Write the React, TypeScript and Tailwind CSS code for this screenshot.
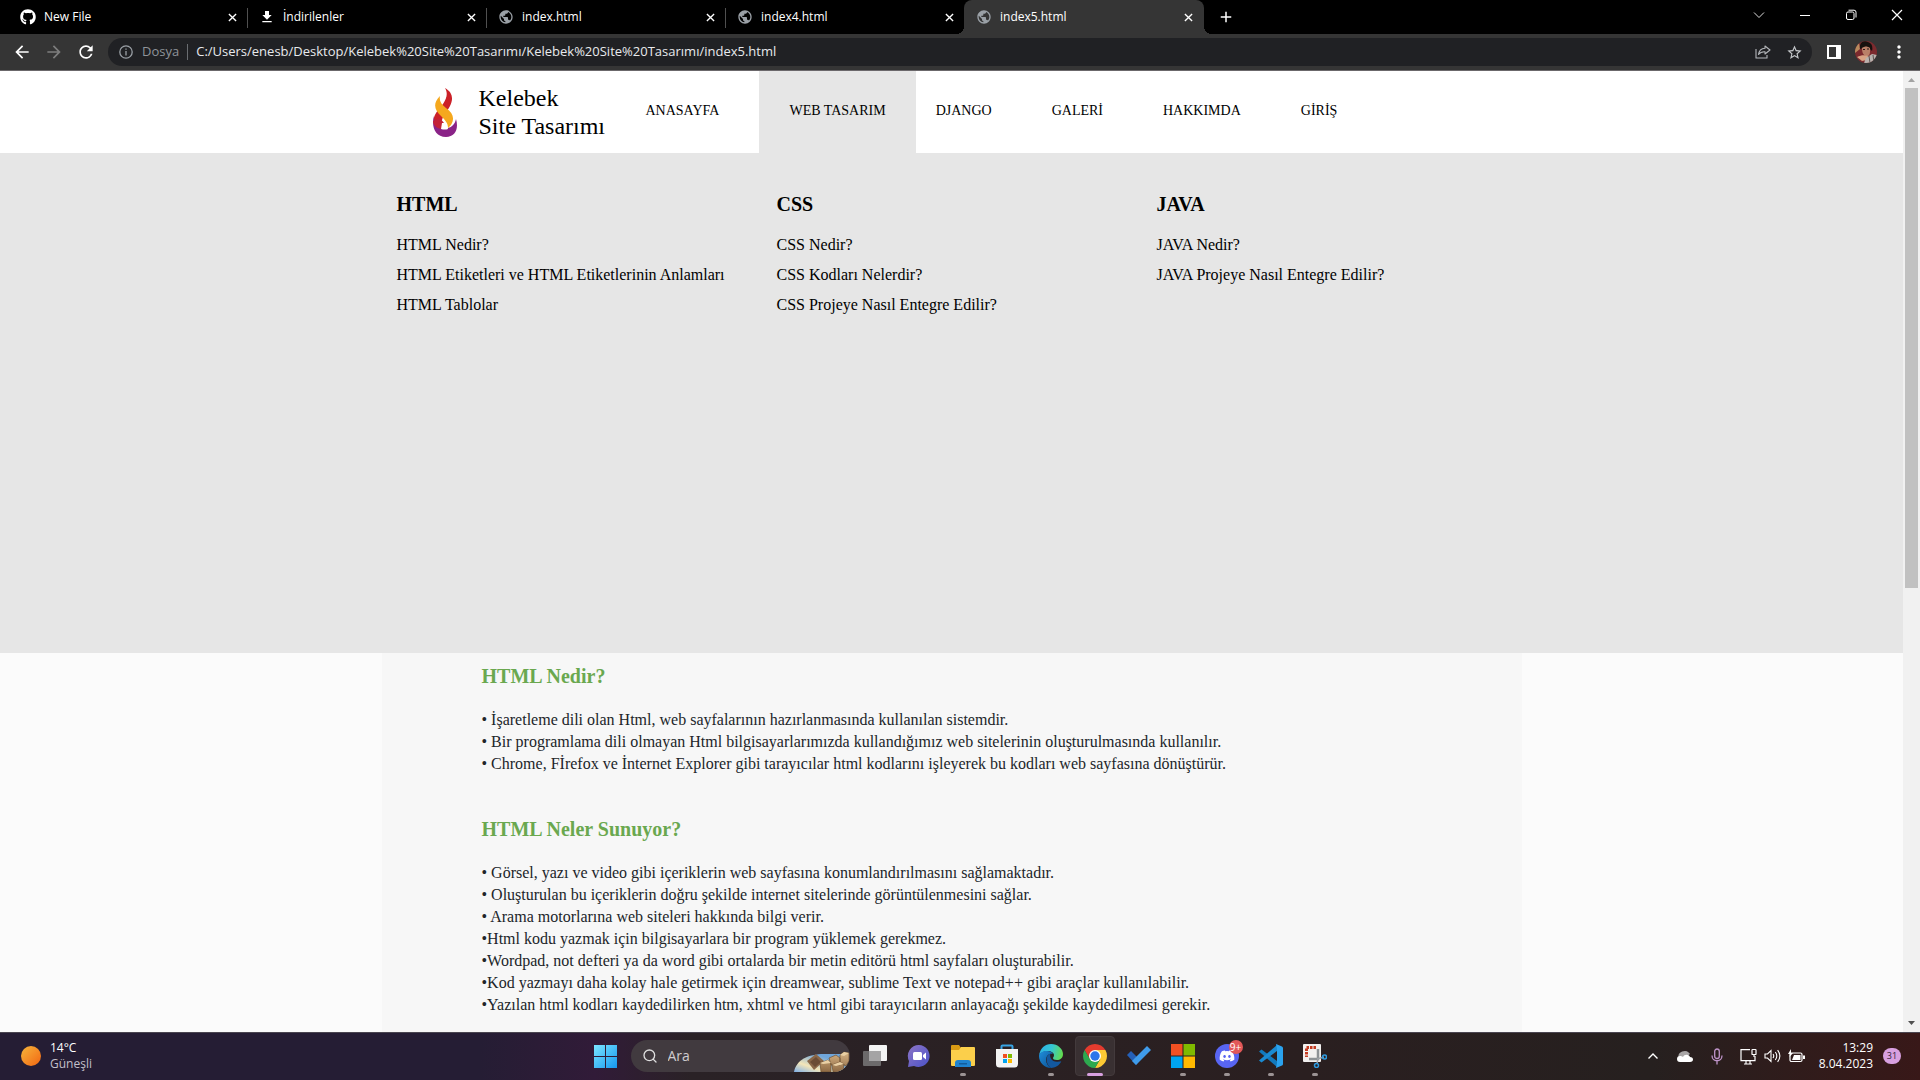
import React from "react";
import { FaGithub, FaDiscord } from "react-icons/fa";
import { MdPublic, MdDownload, MdRefresh, MdArrowBack, MdArrowForward, MdMoreVert, MdStarBorder, MdAdd } from "react-icons/md";
import { Search } from "lucide-react";

const tabs = [
  { title: "New File", icon: <FaGithub className="size-4 text-white" />, active: false, line: true },
  { title: "İndirilenler", icon: <MdDownload className="size-4 text-white" />, active: false, line: true },
  { title: "index.html", icon: <MdPublic className="size-4 text-[#9aa0a6]" />, active: false, line: true },
  { title: "index4.html", icon: <MdPublic className="size-4 text-[#9aa0a6]" />, active: false, line: false },
  { title: "index5.html", icon: <MdPublic className="size-4 text-[#9aa0a6]" />, active: true, line: false },
];

const menu = [
  { title: "HTML", links: ["HTML Nedir?", "HTML Etiketleri ve HTML Etiketlerinin Anlamları", "HTML Tablolar"] },
  { title: "CSS", links: ["CSS Nedir?", "CSS Kodları Nelerdir?", "CSS Projeye Nasıl Entegre Edilir?"] },
  { title: "JAVA", links: ["JAVA Nedir?", "JAVA Projeye Nasıl Entegre Edilir?"] },
];

const sections = [
  {
    title: "HTML Nedir?",
    lines: [
      "• İşaretleme dili olan Html, web sayfalarının hazırlanmasında kullanılan sistemdir.",
      "• Bir programlama dili olmayan Html bilgisayarlarımızda kullandığımız web sitelerinin oluşturulmasında kullanılır.",
      "• Chrome, Fİrefox ve İnternet Explorer gibi tarayıcılar html kodlarını işleyerek bu kodları web sayfasına dönüştürür.",
    ],
  },
  {
    title: "HTML Neler Sunuyor?",
    lines: [
      "• Görsel, yazı ve video gibi içeriklerin web sayfasına konumlandırılmasını sağlamaktadır.",
      "• Oluşturulan bu içeriklerin doğru şekilde internet sitelerinde görüntülenmesini sağlar.",
      "• Arama motorlarına web siteleri hakkında bilgi verir.",
      "•Html kodu yazmak için bilgisayarlara bir program yüklemek gerekmez.",
      "•Wordpad, not defteri ya da word gibi ortalarda bir metin editörü html sayfaları oluşturabilir.",
      "•Kod yazmayı daha kolay hale getirmek için dreamwear, sublime Text ve notepad++ gibi araçlar kullanılabilir.",
      "•Yazılan html kodları kaydedilirken htm, xhtml ve html gibi tarayıcıların anlayacağı şekilde kaydedilmesi gerekir.",
    ],
  },
];

function Cross({ className }: { className: string }) {
  return (
    <svg viewBox="0 0 10 10" className={className} stroke="currentColor" strokeWidth="1.5" fill="none">
      <path d="M1 1l8 8M9 1L1 9" />
    </svg>
  );
}

function TabStrip() {
  return (
    <div className="flex h-[34px] items-stretch bg-black pl-2 text-white">
      {tabs.map((t) => (
        <div
          key={t.title}
          className={
            t.active
              ? "relative flex w-[240px] items-center rounded-t-lg bg-[#353535] pr-2 pl-3"
              : "relative flex w-[239px] items-center pr-[7px] pl-3"
          }
        >
          {t.active && (
            <>
              <span className="absolute bottom-0 -left-2 size-2 bg-[radial-gradient(circle_at_0_0,#000_8px,#353535_8px)]" />
              <span className="absolute -right-2 bottom-0 size-2 bg-[radial-gradient(circle_at_100%_0,#000_8px,#353535_8px)]" />
            </>
          )}
          {t.icon}
          <span className="ml-2 flex-1 text-xs">{t.title}</span>
          <button aria-label={`${t.title} sekmesini kapat`} className="flex size-4 items-center justify-center">
            <Cross className="size-[9px]" />
          </button>
          {t.line && <span className="absolute top-2 -right-px h-5 w-px bg-[#505050]" />}
        </div>
      ))}
      <button aria-label="Yeni sekme" className="ml-[13px] flex items-center">
        <MdAdd className="size-[18px]" />
      </button>
      <div className="ml-auto flex items-center pb-1">
        <button aria-label="Sekme ara" className="flex w-[46px] justify-center">
          <svg viewBox="0 0 12 12" className="size-3" stroke="#ddd" fill="none"><path d="M1 3.5l5 5 5-5" /></svg>
        </button>
        <button aria-label="Simge durumuna küçült" className="flex w-[46px] justify-center">
          <svg viewBox="0 0 12 12" className="size-3" stroke="#fff" fill="none"><path d="M1 6.5h10" /></svg>
        </button>
        <button aria-label="Önceki boyut" className="flex w-[46px] justify-center">
          <svg viewBox="0 0 12 12" className="size-3" stroke="#fff" fill="none">
            <rect x="1.5" y="3" width="7.5" height="7.5" rx="1.5" />
            <path d="M3.5 1.2H9a2 2 0 0 1 2 2v5.3" />
          </svg>
        </button>
        <button aria-label="Kapat" className="flex w-[46px] justify-center">
          <svg viewBox="0 0 12 12" className="size-3" stroke="#fff" fill="none" strokeWidth="1.2"><path d="M1 1l10 10M11 1L1 11" /></svg>
        </button>
      </div>
    </div>
  );
}

function Toolbar() {
  return (
    <div className="flex h-[37px] items-center border-b border-[#6b686b] bg-[#353535] pl-3 text-white">
      <button aria-label="Geri" className="flex w-8 items-center"><MdArrowBack className="size-5" /></button>
      <button aria-label="İleri" className="flex w-8 items-center"><MdArrowForward className="size-5 text-[#7d7d7d]" /></button>
      <button aria-label="Yenile" className="flex w-8 items-center"><MdRefresh className="size-5" /></button>
      <div className="flex h-7 flex-1 items-center rounded-full bg-[#202124] pr-[9px] pl-[11px]">
        <svg viewBox="0 0 14 14" className="size-[14px] shrink-0" stroke="#9aa0a6" strokeWidth="1.3" fill="none">
          <circle cx="7" cy="7" r="6.2" /><path d="M7 6v4.5M7 3.4v1.4" />
        </svg>
        <span className="ml-[9px] text-[13px] text-[#8f949a]">Dosya</span>
        <span className="mx-2 h-4 w-px bg-[#6a6d71]" />
        <input
          aria-label="Adres çubuğu"
          readOnly
          value="C:/Users/enesb/Desktop/Kelebek%20Site%20Tasarımı/Kelebek%20Site%20Tasarımı/index5.html"
          className="min-w-0 flex-1 bg-transparent text-[13px] text-[#e8eaed] outline-none"
        />
        <button aria-label="Paylaş" className="mr-[15px]">
          <svg viewBox="0 0 16 16" className="size-4" stroke="#b4b7bb" strokeWidth="1.1" fill="none" strokeLinejoin="round">
            <path d="M1 5v9h11v-3" />
            <path d="M10 2l5 4-5 4V7.8C7 7.600 5 8.500 3.500 10.500 4 7 6.500 4.400 10 4.200z" />
          </svg>
        </button>
        <button aria-label="Yer işareti ekle"><MdStarBorder className="size-[17px] text-[#c4c7ca]" /></button>
      </div>
      <button aria-label="Yan panel" className="ml-[15px]">
        <svg viewBox="0 0 14 14" className="size-[14px]" fill="#fff"><path d="M0 0h14v14H0zM2 2v10h7V2z" fillRule="evenodd" /></svg>
      </button>
      <button aria-label="Profil" className="ml-[14px]">
        <svg viewBox="0 0 22 22" className="size-[22px]">
          <defs><clipPath id="face"><circle cx="11" cy="11" r="11" /></clipPath></defs>
          <g clipPath="url(#face)">
            <rect width="22" height="22" fill="#7c2a2e" />
            <path d="M0 3l4-1 1 6-5 4z" fill="#b98a5e" />
            <path d="M5 8C4 1 9-1 13 1c4 1 5 5 4 9l-4-4-5 1z" fill="#17110f" />
            <path d="M7 7c3-2 5-2 8 0l0 4c0 3-2 5-4 4-3-1-4-4-4-8z" fill="#b98068" />
            <path d="M2 16c4-2 8-2 11-1l-1 4-5 1z" fill="#d8a384" />
            <path d="M11 17l6-4 5 1v8H9z" fill="#b9b2ae" />
            <path d="M14 15l1 7M18 14l1 8" stroke="#5d5350" strokeWidth="1" />
            <path d="M8 8.500h2M12 8h2" stroke="#2a1a16" strokeWidth="1" />
          </g>
        </svg>
      </button>
      <button aria-label="Chrome menüsü" className="mr-[11px] ml-3"><MdMoreVert className="size-5" /></button>
    </div>
  );
}

function Flame() {
  return (
    <svg viewBox="0 0 24 49" className="h-[49px] w-6">
      <path d="M12 0c7 4 9 10 5 18-3 6-8 9-9 19l-5 3C-3 29 4 24 10 16c4-6 5-11 2-16z" fill="#cb2128" />
      <path d="M1 28c-3 10 1 21 12 21 9 0 13-8 10-18-1 5-4 8-8 9H9c-5-2-8-6-8-12z" fill="#8a2387" />
      <path d="M0 33c0 4 4 8 9 8l2-6-4-5z" fill="#c32238" />
      <path d="M9 35h5l1 6q-3 1-7 0z" fill="#fff" />
      <path d="M7 8c-1 5 1 8 6 12 7 5 9 10 5 17l-3 3c0-5-3-8-7-12C2 22-1 16 7 8z" fill="#f5a81e" />
    </svg>
  );
}

function SiteHeader() {
  return (
    <header className="flex h-[82px] shrink-0 bg-white text-black">
      <div className="mx-auto flex w-full max-w-[1140px] pl-[51px]">
        <a href="#" className="flex items-center">
          <Flame />
          <span className="ml-[22px] w-[137px] text-2xl leading-7">Kelebek<br />Site Tasarımı</span>
        </a>
        <nav className="flex items-stretch text-sm">
          <a href="#" className="flex items-center pr-10 pb-0.5 pl-[30px]">ANASAYFA</a>
          <a href="#" className="flex items-center bg-[#e6e6e6] px-[30px] pb-0.5">WEB TASARIM</a>
          <a href="#" className="flex items-center pr-[30px] pb-0.5 pl-5">DJANGO</a>
          <a href="#" className="flex items-center px-[30px] pb-0.5">GALERİ</a>
          <a href="#" className="flex items-center px-[30px] pb-0.5">HAKKIMDA</a>
          <a href="#" className="flex items-center px-[30px] pb-0.5">GİRİŞ</a>
        </nav>
      </div>
    </header>
  );
}

function Site() {
  return (
    <div className="flex min-w-0 flex-1 flex-col overflow-hidden bg-[#fbfbfb] font-['Liberation_Serif',serif]">
      <SiteHeader />
      <div className="h-[500px] shrink-0 bg-[#e6e6e6] text-black">
        <div className="mx-auto grid w-full max-w-[1140px] grid-cols-3 pt-[39px]">
          {menu.map((c) => (
            <div key={c.title} className="pl-[15px] whitespace-nowrap">
              <h3 className="text-xl leading-6 font-bold">{c.title}</h3>
              <ul className="mt-[14px] text-base leading-[30px]">
                {c.links.map((l) => (
                  <li key={l}><a href="#">{l}</a></li>
                ))}
              </ul>
            </div>
          ))}
        </div>
      </div>
      <main className="mx-auto w-full max-w-[1140px] flex-1 bg-[#f7f7f7] px-[100px] pt-[11px] text-[#212529]">
        {sections.map((s) => (
          <section key={s.title} className="mb-[42px]">
            <h2 className="text-xl leading-6 font-bold text-[#6aa84f]">{s.title}</h2>
            <div className="mt-[21px] text-base leading-[22px]">
              {s.lines.map((l) => (
                <p key={l}>{l}</p>
              ))}
            </div>
          </section>
        ))}
      </main>
    </div>
  );
}

function Scrollbar() {
  return (
    <div className="flex w-[17px] shrink-0 flex-col items-center bg-[#f1f1f1]">
      <svg viewBox="0 0 17 17" className="size-[17px]" fill="#a3a3a3"><path d="M5 11l3.500-4 3.500 4z" /></svg>
      <span className="h-[500px] w-[13px] bg-[#c1c1c1]" />
      <svg viewBox="0 0 17 17" className="mt-auto size-[17px]" fill="#505050"><path d="M5 6l3.500 4L12 6z" /></svg>
    </div>
  );
}

function WindowsLogo() {
  return (
    <svg viewBox="0 0 23 23" className="size-[23px]">
      <defs>
        <linearGradient id="win" x1="0" y1="0" x2="1" y2="1"><stop offset="0" stopColor="#7be6ff" /><stop offset="1" stopColor="#1597ef" /></linearGradient>
      </defs>
      <path d="M0 0h11v11H0zM12 0h11v11H12zM0 12h11v11H0zM12 12h11v11H12z" fill="url(#win)" />
    </svg>
  );
}

function SearchArt() {
  return (
    <svg viewBox="0 0 56 22" className="absolute right-0 bottom-0 h-[22px] w-14">
      <defs>
        <linearGradient id="sky" x1="0" y1="1" x2="1" y2="0"><stop offset="0" stopColor="#7fb0e8" /><stop offset=".3" stopColor="#f4e6b8" /><stop offset=".7" stopColor="#6fa6dc" /></linearGradient>
        <linearGradient id="stone" x1="0" y1="0" x2="0" y2="1"><stop offset="0" stopColor="#d8b586" /><stop offset="1" stopColor="#8e6a44" /></linearGradient>
      </defs>
      <path d="M0 22C2 10 14 4 30 4h24v8c-2 7-7 10-13 10z" fill="url(#sky)" />
      <path d="M13 11l9-7 8 7-10 9z" fill="#8a6748" />
      <path d="M16 12l6-5 5 5-6 5z" fill="#6b4c35" />
      <path d="M26 13l8-3 3 3v9H27zM35 8l7-3 4 3v7h-9zM38 15l8-3 4 2-1 8H39zM46 5l4-3 5 1v8l-3 5-6-3z" fill="url(#stone)" stroke="#6e5032" strokeWidth=".7" />
      <path d="M26 13l8-3 3 3-8 1zM38 15l8-3 4 2-8 2zM46 5l4-3 5 1-5 3z" fill="#ead0a4" />
    </svg>
  );
}

function TaskView() {
  return (
    <svg viewBox="0 0 24 22" className="h-[22px] w-6">
      <rect x="6" width="18" height="16" rx="1" fill="#f4f4f4" />
      <rect y="6" width="18" height="15" rx="1" fill="#6c6a6b" />
      <path d="M6 6h12v10H6z" fill="#a5a4a5" />
    </svg>
  );
}

function Chat() {
  return (
    <svg viewBox="0 0 24 24" className="size-6">
      <defs><linearGradient id="chat" x1="0" y1="0" x2="1" y2="1"><stop offset="0" stopColor="#8d75c6" /><stop offset="1" stopColor="#4b52c8" /></linearGradient></defs>
      <path d="M12 1a11 11 0 1 1-5 21l-6 1 1-6A11 11 0 0 1 12 1z" fill="url(#chat)" />
      <rect x="6" y="8" width="9" height="8" rx="1.500" fill="#fff" />
      <path d="M16 11l3-2.500v7L16 13z" fill="#fff" />
    </svg>
  );
}

function Explorer() {
  return (
    <svg viewBox="0 0 24 22" className="h-[22px] w-6">
      <path d="M0 1q0-1 1-1h7l2 3h8v5H0z" fill="#d99a14" />
      <path d="M0 5h8l2-3h13q1 0 1 1v17q0 1-1 1H1q-1 0-1-1z" fill="#fbcf4b" />
      <path d="M4 22v-4q0-3 3-3h10q3 0 3 3v4z" fill="#1f83cf" />
      <path d="M8 18h8v1.500H8z" fill="#135d9d" />
    </svg>
  );
}

function Store() {
  return (
    <svg viewBox="0 0 24 24" className="size-6">
      <path d="M6.500 6V2.500q0-1 1-1h9q1 0 1 1V6" stroke="#38a5e5" strokeWidth="2" fill="none" />
      <path d="M1 5h22v15q0 3.500-3.500 3.500h-15Q1 23.500 1 20z" fill="#f3f3f3" />
      <path d="M8 10h4v4H8z" fill="#f25022" /><path d="M13 10h4v4h-4z" fill="#7fba00" />
      <path d="M8 15h4v4H8z" fill="#00a4ef" /><path d="M13 15h4v4h-4z" fill="#ffb900" />
    </svg>
  );
}

function Edge() {
  return (
    <svg viewBox="0 0 24 24" className="size-6">
      <defs>
        <linearGradient id="edgeTop" x1="0" y1="0.300" x2="1" y2="0.500"><stop offset="0" stopColor="#2bb0e6" /><stop offset=".5" stopColor="#35c6d4" /><stop offset="1" stopColor="#63dc4e" /></linearGradient>
        <linearGradient id="edgeLow" x1="0" y1="0" x2="1" y2="1"><stop offset="0" stopColor="#1f8fdc" /><stop offset="1" stopColor="#0c4f92" /></linearGradient>
      </defs>
      <path d="M0 12C1 4 6 0 12 0c7 0 12 5 12 10 0 4-3 6-6 6-3 0-4-1-4-2s1-1 1-3-3-4-6-4c-5 0-9 3-9 5z" fill="url(#edgeTop)" />
      <path d="M0 12c0-3 4-5 8-5 3 0 5 1 6 3-4-1-7 2-7 6 0 3 2 6 5 8C5 24 0 18 0 12z" fill="url(#edgeLow)" />
      <path d="M7.500 15c0-3 2-5 4-5.300C10 13 13 19 20 17.500c1 0 2-.5 2.300-.2C20 22 16 24 12 24c-3-2-4.500-5-4.500-9z" fill="#13589f" />
    </svg>
  );
}

function Chrome() {
  return (
    <svg viewBox="0 0 24 24" className="size-6">
      <path d="M12 6h10.390A12 12 0 0 1 12 24l5.200-9z" fill="#fcc934" />
      <path d="M1.610 6A12 12 0 0 1 22.390 6H12L6.800 15z" fill="#e33b2e" />
      <path d="M1.610 6l5.200 9L12 18l5.200-3L12 24A12 12 0 0 1 1.610 6z" fill="#2da94f" />
      <circle cx="12" cy="12" r="6" fill="#fff" /><circle cx="12" cy="12" r="4.700" fill="#2b75ea" />
    </svg>
  );
}

function Todo() {
  return (
    <svg viewBox="0 0 24 20" className="h-5 w-6">
      <path d="M0 9l4-4 9 9-4 5z" fill="#2560b8" /><path d="M5 15L20 0l4 4L9 19z" fill="#3f9bea" />
    </svg>
  );
}

function Microsoft() {
  return (
    <svg viewBox="0 0 24 24" className="size-6">
      <path d="M0 0h11.500v11.500H0z" fill="#f25022" /><path d="M12.500 0H24v11.500H12.500z" fill="#7fba00" />
      <path d="M0 12.500h11.500V24H0z" fill="#00a4ef" /><path d="M12.500 12.500H24V24H12.500z" fill="#ffb900" />
    </svg>
  );
}

function Discord() {
  return (
    <span className="flex size-6 items-center justify-center rounded-full bg-[#5865f2]">
      <FaDiscord className="size-4 text-white" />
      <span className="absolute -top-1 right-[6px] flex size-[14px] items-center justify-center rounded-full bg-[#e25858] text-[10px] text-white">9+</span>
    </span>
  );
}

function VsCode() {
  return (
    <svg viewBox="0 0 24 24" className="size-6">
      <path d="M0 7.500l2.500-2L18 17v6z" fill="#1279bd" />
      <path d="M0 16.500l2.500 2L18 7V1z" fill="#1a8ad2" />
      <path d="M17 0l6 2.500q1 .5 1 1.500v16q0 1-1 1.500L17 24l1-5V5z" fill="#2aa2ee" />
    </svg>
  );
}

function Snip() {
  return (
    <svg viewBox="0 0 24 24" className="size-6">
      <rect width="18" height="18" rx="1" fill="#f2f0ef" />
      <path d="M13 3.500H3.500V13" stroke="#c33b22" strokeWidth="3" strokeDasharray="2.500 1" fill="none" />
      <path d="M6 15h9V5" stroke="#8e9295" strokeWidth="2.500" fill="none" />
      <path d="M14 15l7-2M15 14l-1 6" stroke="#9da1a5" strokeWidth="1.500" />
      <circle cx="21.500" cy="13" r="2" stroke="#2e9be0" strokeWidth="1.500" fill="none" />
      <circle cx="13.500" cy="21.500" r="2" stroke="#2e9be0" strokeWidth="1.500" fill="none" />
    </svg>
  );
}

const apps = [
  { name: "Görev görünümü", icon: <TaskView />, state: "none" },
  { name: "Sohbet", icon: <Chat />, state: "none" },
  { name: "Dosya Gezgini", icon: <Explorer />, state: "open" },
  { name: "Microsoft Store", icon: <Store />, state: "none" },
  { name: "Microsoft Edge", icon: <Edge />, state: "open" },
  { name: "Google Chrome", icon: <Chrome />, state: "active" },
  { name: "To Do", icon: <Todo />, state: "none" },
  { name: "Microsoft 365", icon: <Microsoft />, state: "open" },
  { name: "Discord", icon: <Discord />, state: "open" },
  { name: "Visual Studio Code", icon: <VsCode />, state: "open" },
  { name: "Ekran Alıntısı Aracı", icon: <Snip />, state: "open" },
];

function Taskbar() {
  return (
    <footer className="grid h-12 shrink-0 grid-cols-[1fr_auto_1fr] items-center border-t border-[#4a4550] bg-[linear-gradient(90deg,#251d34_0%,#251d34_25%,#311b38_31%,#2a2226_36%,#2a1f20_68%,#26201f_86%,#381818_100%)] pb-px text-white">
      <div className="flex items-center pl-[21px]">
        <span className="size-5 rounded-full bg-linear-to-br from-[#f5b53a] to-[#f0630f]" />
        <div className="ml-[9px] text-xs leading-4">
          <p>14°C</p>
          <p className="text-[#c3c0ca]">Güneşli</p>
        </div>
      </div>
      <div className="flex items-center">
        <button aria-label="Başlat" className="flex h-10 w-11 items-center justify-center"><WindowsLogo /></button>
        <label className="relative mx-[3px] flex h-8 w-[219px] items-center overflow-hidden rounded-full bg-[#413a3f] pl-[11px]">
          <Search className="size-4 shrink-0 text-[#dedede]" />
          <input aria-label="Ara" placeholder="Ara" className="ml-[10px] w-24 bg-transparent text-sm outline-none placeholder:text-[#d0cccf]" />
          <SearchArt />
        </label>
        {apps.map((a) => (
          <button key={a.name} aria-label={a.name} className="relative flex h-10 w-11 items-center justify-center">
            {a.state === "active" && <span className="absolute inset-x-[2px] inset-y-0 rounded-sm border border-[#433a3c] bg-[#393032]" />}
            <span className="relative flex w-11 justify-center">{a.icon}</span>
            {a.state === "open" && <span className="absolute bottom-0 h-[3px] w-[6px] rounded-full bg-[#9b9394]" />}
            {a.state === "active" && <span className="absolute bottom-0 h-[3px] w-4 rounded-full bg-[#d8a0e0]" />}
          </button>
        ))}
      </div>
      <div className="flex items-center justify-end pr-[19px]">
        <button aria-label="Gizli simgeler" className="flex w-8 justify-center">
          <svg viewBox="0 0 12 12" className="size-3" stroke="#fff" strokeWidth="1.400" fill="none"><path d="M1.500 8.500L6 4l4.500 4.500" /></svg>
        </button>
        <button aria-label="OneDrive" className="flex w-8 justify-center">
          <svg viewBox="0 0 16 11" className="h-[11px] w-4">
            <path d="M2 7C0 3 4 0 8 0c3 0 4 2 5 3L6 8z" fill="#a9a6a6" />
            <path d="M3 11a3 3 0 0 1 0-6c1 0 2 0 3 1 1-3 6-3 7 0 4 0 4 5 0 5z" fill="#fff" />
          </svg>
        </button>
        <button aria-label="Mikrofon" className="mr-[7px] flex w-8 justify-center">
          <svg viewBox="0 0 12 17" className="h-[17px] w-3" stroke="#bf94c9" strokeWidth="1.300" fill="none">
            <rect x="3.700" y="1" width="4.600" height="9.500" rx="2.300" /><path d="M1 7.500c0 7 10 7 10 0M6 13v3.500" />
          </svg>
        </button>
        <button aria-label="Ağ, ses ve pil" className="mr-[14px] flex items-center gap-[7px]">
          <svg viewBox="0 0 17 17" className="size-[17px]" stroke="#fff" strokeWidth="1.200" fill="none">
            <path d="M10 1.600H1v11h14V8M4 16h8M6 13v3M10 13v3" /><rect x="12" y="1.500" width="4" height="5" rx=".6" /><path d="M14 6.500V9" />
          </svg>
          <svg viewBox="0 0 17 14" className="h-[14px] w-[17px]" stroke="#fff" strokeWidth="1.100" fill="none">
            <path d="M1 5v4h2.500L7 12.500v-11L3.500 5zM9 5q1.500 2 0 4M11.300 3q3 4 0 8M13.600 1.200q4.500 5.800 0 11.600" />
          </svg>
          <svg viewBox="0 0 17 14" className="h-[14px] w-[17px]">
            <rect x="2" y="4" width="12" height="8.500" rx="1.500" stroke="#fff" strokeWidth="1.200" fill="none" />
            <path d="M4 11l2-5h6.500v5zM15 6.500h2v3.500h-2zM3 0L0 5h2L1.500 8 5 4H3z" fill="#fff" />
          </svg>
        </button>
        <div className="text-right text-xs leading-4">
          <p>13:29</p>
          <p>8.04.2023</p>
        </div>
        <span className="ml-[10px] flex h-4 w-[18px] items-center justify-center rounded-full bg-[#d8a0e0] text-[9px] text-[#33203a]">31</span>
      </div>
    </footer>
  );
}

export default function App() {
  return (
    <div className="flex h-screen flex-col overflow-hidden font-['Open_Sans','Noto_Sans',sans-serif]">
      <TabStrip />
      <Toolbar />
      <div className="flex min-h-0 flex-1">
        <Site />
        <Scrollbar />
      </div>
      <Taskbar />
    </div>
  );
}
